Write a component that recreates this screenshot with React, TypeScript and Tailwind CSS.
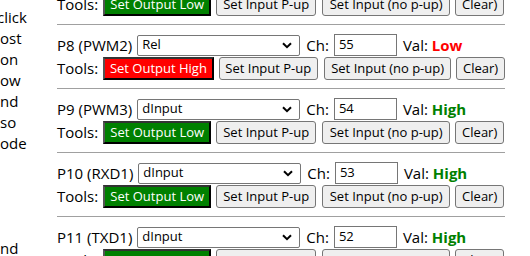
import React from "react";

type Pin = {
  label: string;
  mode: string;
  ch: string;
  val: "High" | "Low";
};

const pins: Pin[] = [
  { label: "P8 (PWM2)", mode: "Rel", ch: "55", val: "Low" },
  { label: "P9 (PWM3)", mode: "dInput", ch: "54", val: "High" },
  { label: "P10 (RXD1)", mode: "dInput", ch: "53", val: "High" },
  { label: "P11 (TXD1)", mode: "dInput", ch: "52", val: "High" },
];

// ends of the help text column, scrolled off to the left
const helpLines = ["click", "ost", "on", "ow", "nd", "so", "ode", "", "", "", "", "nd"];

function Chevron() {
  return (
    <svg className="w-[10px] h-[7px]" viewBox="0 0 10 7" fill="none">
      <path d="M1 1.2 5 5.2 9 1.2" stroke="#000" strokeWidth={2} />
    </svg>
  );
}

function ToolsRow({ high }: { high: boolean }) {
  return (
    <div className="flex items-center h-[23px]">
      <span className="mr-[5px]">Tools:</span>
      {high ? (
        <button className="h-[23px] w-[111px] bg-[#ff0000] text-white text-[13px] border-2 border-black border-l-[#555] border-t-[#333]">
          Set Output High
        </button>
      ) : (
        <button className="h-[23px] w-[108px] bg-[#008000] text-white text-[13px] border-2 border-black border-l-[#555] border-t-[#333]">
          Set Output Low
        </button>
      )}
      <button className="ml-[5px] h-[23px] w-[100px] bg-[#efefef] text-[13px] border border-[#767676] rounded-[3px]">
        Set Input P-up
      </button>
      <button className="ml-[6px] h-[23px] w-[128px] bg-[#efefef] text-[13px] border border-[#767676] rounded-[3px]">
        Set Input (no p-up)
      </button>
      <button className="ml-[5px] h-[23px] w-[49px] bg-[#efefef] text-[13px] border border-[#767676] rounded-[3px]">
        Clear)
      </button>
    </div>
  );
}

function PinBlock({ pin }: { pin: Pin }) {
  const low = pin.val === "Low";
  return (
    <div>
      <div className="my-2 h-px bg-[#a0a0a0]" />
      <div className="flex items-center h-6">
        <span className="mr-[5px]">{pin.label}</span>
        <div className="h-[21px] w-[163px] border border-[#767676] rounded-[2px] bg-white flex items-center justify-between pl-[4px] pr-[7px] text-[13px]">
          <span>{pin.mode}</span>
          <Chevron />
        </div>
        <span className="ml-[6px] mr-[5px]">Ch:</span>
        <div className="h-[22px] w-[63px] border border-[#767676] bg-white flex items-center pl-[4px] text-[13px]">
          {pin.ch}
        </div>
        <span className="ml-[6px]">
          Val:{" "}
          <b className={low ? "text-[#ff0000]" : "text-[#008000]"}>{pin.val}</b>
        </span>
      </div>
      <ToolsRow high={low} />
    </div>
  );
}

export default function App() {
  return (
    <div className="flex w-[530px] h-[256px] overflow-hidden bg-white text-black text-[15px] font-['Open_Sans',sans-serif]">
      <div className="w-[57px] shrink-0 overflow-hidden pt-[7px] leading-[21px]">
        {helpLines.map((t, i) => (
          <div key={i} className={i === 0 ? "-ml-[3px]" : ""}>
            {t || "\u00a0"}
          </div>
        ))}
      </div>
      <div className="w-[448px] shrink-0 -mt-[7px]">
        <ToolsRow high={false} />
        {pins.map((p) => (
          <PinBlock key={p.label} pin={p} />
        ))}
      </div>
    </div>
  );
}
